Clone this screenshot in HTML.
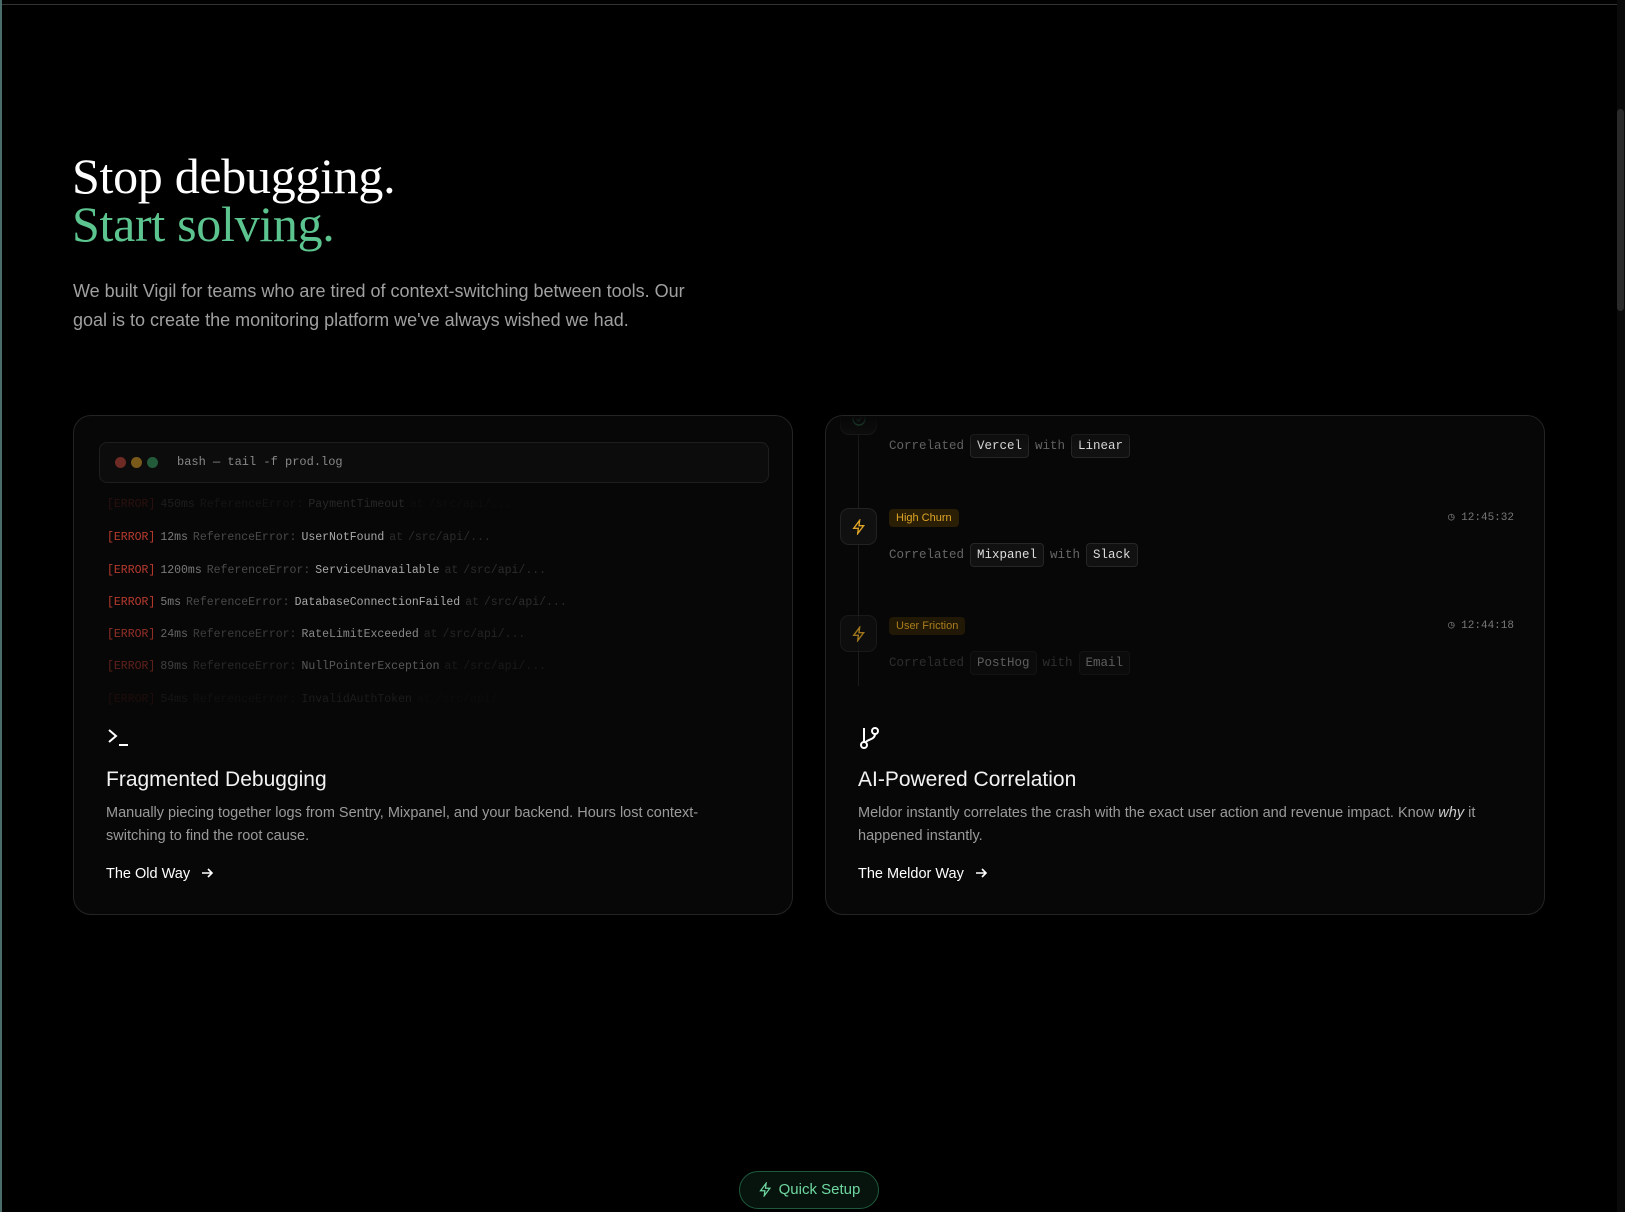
<!DOCTYPE html>
<html><head><meta charset="utf-8"><style>
*{box-sizing:border-box;margin:0;padding:0}
html,body{width:1625px;height:1212px;background:#000;overflow:hidden;font-family:"Liberation Sans",sans-serif}
.abs{position:absolute}
.mono{font-family:"Liberation Mono",monospace}
.card{position:absolute;top:415px;width:720px;height:500px;border:1px solid #242424;border-radius:18px;background:#070707;overflow:hidden}
.log{position:absolute;left:33px;font-size:11.5px;white-space:nowrap;font-family:"Liberation Mono",monospace;word-spacing:-2px}
.log span{margin-right:5px}
.e{color:#b83a2e}.n{color:#7a7a7a}.r{color:#4a4a4a}.m{color:#a8a8a8}.p{color:#2c2c2c}
.chip{display:inline-block;border:1px solid #262626;background:#111;border-radius:4px;padding:4px 6px;color:#ddd;margin:0 6px}
.node{position:absolute;left:14px;width:37px;height:37px;border:1px solid #222;border-radius:9px;background:#101010}
.badge{position:absolute;left:63px;font-size:11px;padding:3px 7px;border-radius:4px;background:#2a1e05;color:#e0a526}
.time{position:absolute;right:30px;font-size:11px;color:#777;font-family:"Liberation Mono",monospace}
.row{position:absolute;left:63px;font-size:12.5px;color:#666;font-family:"Liberation Mono",monospace}
h3{position:absolute;left:32px;top:352px;font-size:21px;font-weight:400;color:#f2f2f2}
.desc{position:absolute;left:32px;top:386px;width:630px;font-size:14.5px;line-height:23px;color:#9a9a9a}
.link{position:absolute;left:32px;top:450px;font-size:14.5px;color:#fff}
</style></head><body>
<div class="abs" style="left:0;top:4px;width:1625px;height:1px;background:#333"></div>
<div class="abs" style="left:0;top:0;width:2px;height:1212px;background:#4a6d6a"></div>
<div class="abs" style="left:1617px;top:0;width:8px;height:1212px;background:#0a0a0a"></div>
<div class="abs" style="left:1617px;top:109px;width:7px;height:202px;background:#2a2a2a;border-radius:4px"></div>

<div class="abs" style="left:72px;top:152px;font-family:'Liberation Serif',serif;font-size:50px;line-height:48px;color:#fff;letter-spacing:-0.3px">Stop debugging.<br><span style="color:#5cc48e">Start solving.</span></div>
<div class="abs" style="left:73px;top:277px;width:650px;font-size:18px;line-height:29px;color:#a0a0a0">We built Vigil for teams who are tired of context-switching between tools. Our goal is to create the monitoring platform we've always wished we had.</div>

<div class="card" style="left:73px">
 <div class="abs" style="left:25px;top:26px;width:670px;height:41px;border:1px solid #1e1e1e;border-radius:8px;background:#0c0c0c">
  <span class="abs" style="left:15px;top:14px;width:11px;height:11px;border-radius:50%;background:#6e2a24"></span>
  <span class="abs" style="left:31px;top:14px;width:11px;height:11px;border-radius:50%;background:#7a5a1a"></span>
  <span class="abs" style="left:47px;top:14px;width:11px;height:11px;border-radius:50%;background:#235a3a"></span>
  <span class="abs mono" style="left:77px;top:12px;font-size:12px;color:#888">bash — tail -f prod.log</span>
 </div>
 <div class="log" style="top:82px;opacity:.2"><span class="e">[ERROR]</span><span class="n">450ms</span><span class="r">ReferenceError:</span><span class="m">PaymentTimeout</span><span class="p">at /src/api/...</span></div>
 <div class="log" style="top:115px"><span class="e">[ERROR]</span><span class="n">12ms</span><span class="r">ReferenceError:</span><span class="m">UserNotFound</span><span class="p">at /src/api/...</span></div>
 <div class="log" style="top:148px"><span class="e">[ERROR]</span><span class="n">1200ms</span><span class="r">ReferenceError:</span><span class="m">ServiceUnavailable</span><span class="p">at /src/api/...</span></div>
 <div class="log" style="top:180px"><span class="e">[ERROR]</span><span class="n">5ms</span><span class="r">ReferenceError:</span><span class="m">DatabaseConnectionFailed</span><span class="p">at /src/api/...</span></div>
 <div class="log" style="top:212px;opacity:.8"><span class="e">[ERROR]</span><span class="n">24ms</span><span class="r">ReferenceError:</span><span class="m">RateLimitExceeded</span><span class="p">at /src/api/...</span></div>
 <div class="log" style="top:244px;opacity:.5"><span class="e">[ERROR]</span><span class="n">89ms</span><span class="r">ReferenceError:</span><span class="m">NullPointerException</span><span class="p">at /src/api/...</span></div>
 <div class="log" style="top:277px;opacity:.12"><span class="e">[ERROR]</span><span class="n">54ms</span><span class="r">ReferenceError:</span><span class="m">InvalidAuthToken</span><span class="p">at /src/api/...</span></div>
 <svg class="abs" style="left:33px;top:310px" width="24" height="22" viewBox="0 0 24 22" fill="none" stroke="#fff" stroke-width="2"><path d="M2 4l7 6-7 6"/><path d="M12 19h9"/></svg>
 <h3>Fragmented Debugging</h3>
 <div class="desc">Manually piecing together logs from Sentry, Mixpanel, and your backend. Hours lost context-switching to find the root cause.</div>
 <div class="link">The Old Way <svg style="vertical-align:-2px;margin-left:6px" width="14" height="14" viewBox="0 0 14 14" fill="none" stroke="#fff" stroke-width="1.6"><path d="M2 7h10M8 3l4 4-4 4"/></svg></div>
</div>

<div class="card" style="left:825px">
 <div class="abs" style="left:32px;top:0;width:1px;height:270px;background:#1c1c1c"></div>
 <div class="node" style="top:-18px"><svg class="abs" style="left:10px;top:12px" width="16" height="16" viewBox="0 0 16 16" fill="none" stroke="#3fa06d" stroke-width="1.5"><circle cx="8" cy="8" r="6"/><path d="M5.5 8l2 2 3-4"/></svg></div>
 <div class="row" style="top:18px">Correlated<span class="chip">Vercel</span>with<span class="chip">Linear</span></div>
 <div class="node" style="top:92px"><svg class="abs" style="left:10px;top:10px" width="16" height="16" viewBox="0 0 24 24" fill="none" stroke="#e0a526" stroke-width="2"><path d="M13 2L4 14h7l-1 8 9-12h-7z"/></svg></div>
 <div class="badge" style="top:93px">High Churn</div>
 <div class="time" style="top:94px">◷ 12:45:32</div>
 <div class="row" style="top:127px">Correlated<span class="chip">Mixpanel</span>with<span class="chip">Slack</span></div>
 <div class="node" style="top:199px;opacity:.7"><svg class="abs" style="left:10px;top:10px" width="16" height="16" viewBox="0 0 24 24" fill="none" stroke="#e0a526" stroke-width="2"><path d="M13 2L4 14h7l-1 8 9-12h-7z"/></svg></div>
 <div class="badge" style="top:201px;opacity:.75">User Friction</div>
 <div class="time" style="top:202px">◷ 12:44:18</div>
 <div class="row" style="top:235px;opacity:.4">Correlated<span class="chip">PostHog</span>with<span class="chip">Email</span></div>
 <div class="abs" style="left:0;top:0;width:720px;height:30px;background:linear-gradient(#070707,rgba(7,7,7,0))"></div>
 <svg class="abs" style="left:33px;top:310px" width="22" height="24" viewBox="0 0 22 24" fill="none" stroke="#fff" stroke-width="2"><circle cx="5" cy="19" r="3"/><circle cx="16" cy="5" r="3"/><path d="M5 2v14"/><path d="M16 8c0 6-8 5-10 9"/></svg>
 <h3>AI-Powered Correlation</h3>
 <div class="desc">Meldor instantly correlates the crash with the exact user action and revenue impact. Know <i style="color:#ccc">why</i> it happened instantly.</div>
 <div class="link">The Meldor Way <svg style="vertical-align:-2px;margin-left:6px" width="14" height="14" viewBox="0 0 14 14" fill="none" stroke="#fff" stroke-width="1.6"><path d="M2 7h10M8 3l4 4-4 4"/></svg></div>
</div>

<div class="abs" style="left:739px;top:1171px;width:140px;height:38px;border:1px solid #1f5a3d;border-radius:19px;background:#06140d;color:#6fd6a0;font-size:15px;line-height:36px;text-align:center">
 <svg style="vertical-align:-3px;margin-right:6px" width="15" height="15" viewBox="0 0 24 24" fill="none" stroke="#6fd6a0" stroke-width="2"><path d="M13 2L4 14h7l-1 8 9-12h-7z"/></svg>Quick Setup</div>
</body></html>
